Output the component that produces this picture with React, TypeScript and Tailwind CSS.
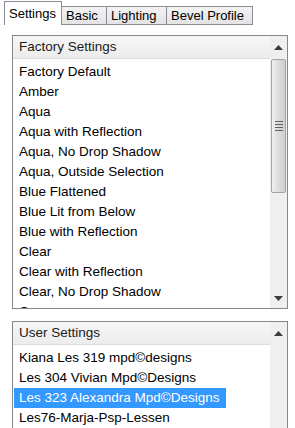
import React from 'react';

const factoryItems = [
    'Factory Default',
    'Amber',
    'Aqua',
    'Aqua with Reflection',
    'Aqua, No Drop Shadow',
    'Aqua, Outside Selection',
    'Blue Flattened',
    'Blue Lit from Below',
    'Blue with Reflection',
    'Clear',
    'Clear with Reflection',
    'Clear, No Drop Shadow',
    'Copper',
];

const userItems = [
    'Kiana Les 319 mpd©designs',
    'Les 304 Vivian Mpd©Designs',
    'Les 323 Alexandra Mpd©Designs',
    'Les76-Marja-Psp-Lessen',
];

const ArrowUp = () => (
    <svg width="9" height="5" viewBox="0 0 9 5">
        <path d="M0 5 L4.5 0 L9 5 Z" fill="#3c3c3c" />
    </svg>
);

const ArrowDown = () => (
    <svg width="9" height="5" viewBox="0 0 9 5">
        <path d="M0 0 L4.5 5 L9 0 Z" fill="#3c3c3c" />
    </svg>
);

const Scrollbar: React.FC<{ thumb?: boolean }> = ({ thumb }) => (
    <div className="w-[17px] shrink-0 bg-[#efefef] flex flex-col items-center">
        <div className="h-[22px] w-full flex items-center justify-center shrink-0">
            <ArrowUp />
        </div>
        {thumb && (
            <div className="w-[15px] h-[134px] mt-[1px] rounded-[2px] border border-[#a3a3a3] bg-gradient-to-r from-[#f0f0f0] via-[#dcdcdf] to-[#cfcfd2] flex flex-col items-center justify-center gap-[2px]">
                <div className="w-[8px] h-[1px] bg-[#606060]" />
                <div className="w-[8px] h-[1px] bg-[#606060]" />
                <div className="w-[8px] h-[1px] bg-[#606060]" />
                <div className="w-[8px] h-[1px] bg-[#606060]" />
            </div>
        )}
        <div className="flex-1" />
        {thumb && (
            <div className="h-[20px] w-full flex items-center justify-center shrink-0">
                <ArrowDown />
            </div>
        )}
    </div>
);

const ListBox: React.FC<{
    title: string;
    items: string[];
    height: string;
    selected?: number;
    thumb?: boolean;
}> = ({ title, items, height, selected, thumb }) => (
    <div className={`ml-[12px] w-[276px] ${height} border border-[#828790] flex overflow-hidden text-[13.5px]`}>
        <div className="flex-1 flex flex-col overflow-hidden">
            <div className="h-[23px] shrink-0 bg-gradient-to-b from-[#f7f7f7] to-[#ececec] border-b border-[#dcdcdc] flex items-center pl-[6px] text-[#1a1a1a]">
                {title}
            </div>
            <div className="pt-[3px] flex flex-col">
                {items.map((item, i) => (
                    <div key={item} className="h-[20px] shrink-0 flex items-center pl-[1px]">
                        <span
                            className={`h-[20px] flex items-center pl-[5px] pr-[6px] whitespace-nowrap ${
                                i === selected ? 'bg-[#3399ff] text-white' : 'text-black'
                            }`}
                        >
                            {item}
                        </span>
                    </div>
                ))}
            </div>
        </div>
        <Scrollbar thumb={thumb} />
    </div>
);

export default function App() {
    return (
        <div
            className="w-[295px] h-[428px] bg-white overflow-hidden text-[13px] leading-none"
            style={{ fontFamily: '"Liberation Sans", Arial, sans-serif' }}
        >
            {/* Tabs */}
            <div className="h-[25px] pl-[4px] flex items-end">
                <div className="w-[58px] h-[24px] bg-white border border-b-0 border-[#898c95] flex items-center pl-[4px] pb-[1px] text-black">
                    Settings
                </div>
                <div className="w-[45px] h-[19px] border border-l-0 border-[#898c95] bg-gradient-to-b from-[#f3f3f3] to-[#e3e3e3] flex items-center pl-[4px] text-black">
                    Basic
                </div>
                <div className="w-[60px] h-[19px] border border-l-0 border-[#898c95] bg-gradient-to-b from-[#f3f3f3] to-[#e3e3e3] flex items-center pl-[4px] text-black">
                    Lighting
                </div>
                <div className="w-[86px] h-[19px] border border-l-0 border-[#898c95] bg-gradient-to-b from-[#f3f3f3] to-[#e3e3e3] flex items-center pl-[4px] text-black">
                    Bevel Profile
                </div>
            </div>

            <div className="pt-[10px] flex flex-col gap-[12px]">
                <ListBox title="Factory Settings" items={factoryItems} height="h-[274px]" thumb />
                <ListBox title="User Settings" items={userItems} height="h-[130px]" selected={2} />
            </div>
        </div>
    );
}
